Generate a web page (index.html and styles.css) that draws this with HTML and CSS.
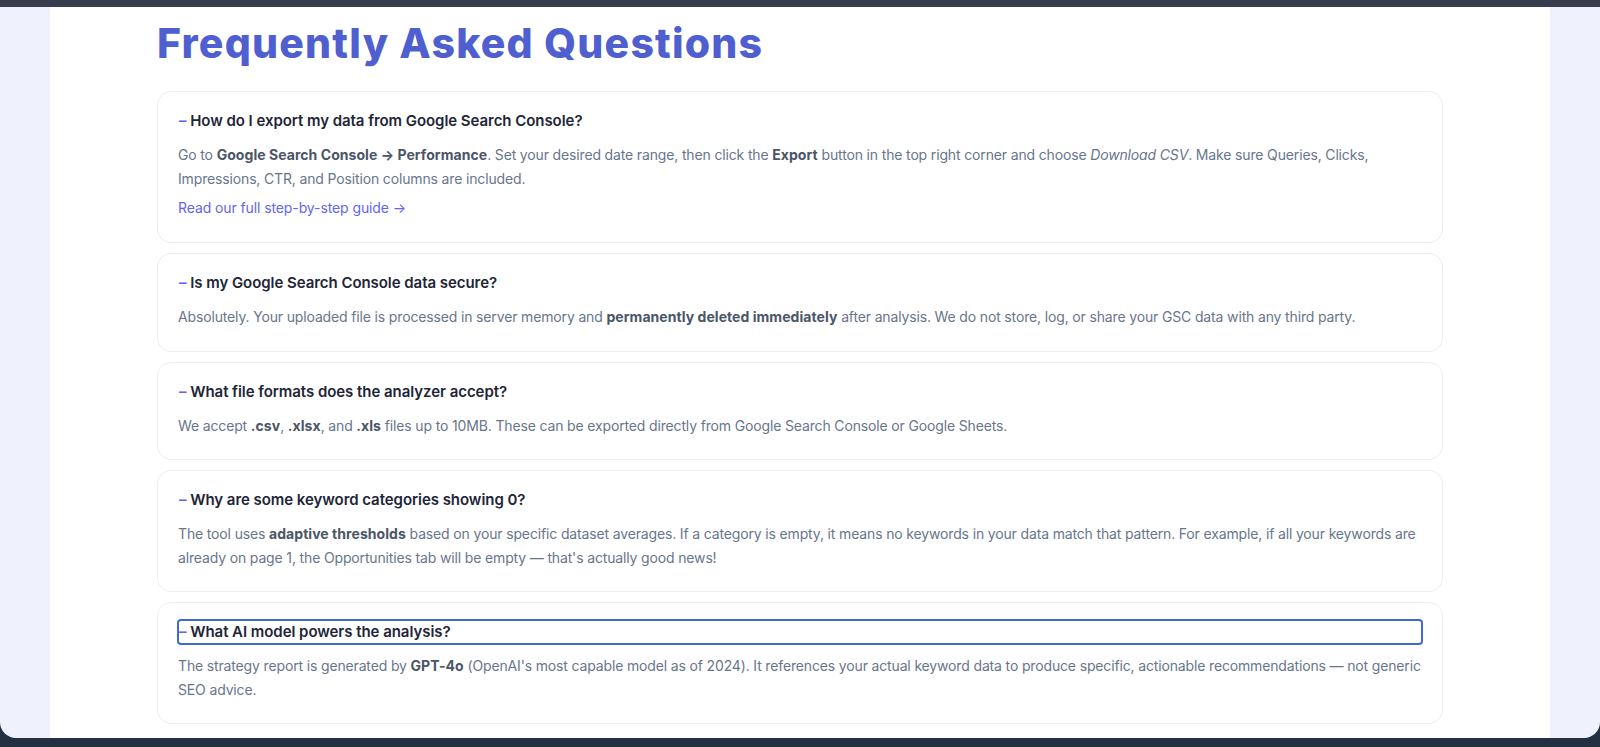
FILE: index.html
```html
<!DOCTYPE html>
<html lang="en">
<head>
<meta charset="utf-8">
<title>FAQ</title>
<link rel="stylesheet" href="styles.css">
</head>
<body>
<div class="window">
  <div class="page">
    <section class="faq">
      <h1 class="faq-title">Frequently Asked Questions</h1>
      <div class="faq-list">
        <details class="faq-item" open>
          <summary class="faq-q"><span class="dash">–</span> How do I export my data from Google Search Console?</summary>
          <p class="faq-a">Go to <strong>Google Search Console → Performance</strong>. Set your desired date range, then click the <strong>Export</strong> button in the top right corner and choose <em>Download CSV</em>. Make sure Queries, Clicks, Impressions, CTR, and Position columns are included.</p>
          <a class="faq-link" href="#">Read our full step-by-step guide →</a>
        </details>
        <details class="faq-item" open>
          <summary class="faq-q"><span class="dash">–</span> Is my Google Search Console data secure?</summary>
          <p class="faq-a">Absolutely. Your uploaded file is processed in server memory and <strong>permanently deleted immediately</strong> after analysis. We do not store, log, or share your GSC data with any third party.</p>
        </details>
        <details class="faq-item" open>
          <summary class="faq-q"><span class="dash">–</span> What file formats does the analyzer accept?</summary>
          <p class="faq-a">We accept <strong>.csv</strong>, <strong>.xlsx</strong>, and <strong>.xls</strong> files up to 10MB. These can be exported directly from Google Search Console or Google Sheets.</p>
        </details>
        <details class="faq-item" open>
          <summary class="faq-q"><span class="dash">–</span> Why are some keyword categories showing 0?</summary>
          <p class="faq-a">The tool uses <strong>adaptive thresholds</strong> based on your specific dataset averages. If a category is empty, it means no keywords in your data match that pattern. For example, if all your keywords are already on page 1, the Opportunities tab will be empty — that's actually good news!</p>
        </details>
        <details class="faq-item" open>
          <summary class="faq-q is-focused"><span class="dash">–</span> What AI model powers the analysis?</summary>
          <p class="faq-a">The strategy report is generated by <strong>GPT-4o</strong> (OpenAI's most capable model as of 2024). It references your actual keyword data to produce specific, actionable recommendations — not generic SEO advice.</p>
        </details>
      </div>
    </section>
  </div>
</div>
</body>
</html>
```
FILE: styles.css
```css
html, body {
  margin: 0;
  padding: 0;
  height: 100%;
}
body {
  background: linear-gradient(180deg, #383d4e 0, #383d4e 7px, #1c2632 7px, #223041 100%);
  font-family: Inter, "Noto Sans", "Liberation Sans", sans-serif;
  overflow: hidden;
}
.window {
  margin-top: 7px;
  height: 731px;
  background: #eff2fd;
  border-radius: 0 0 16px 16px;
  overflow: hidden;
  padding: 0 50px;
  box-sizing: border-box;
}
.page {
  background: #ffffff;
  height: 100%;
  padding-top: 12px;
  box-sizing: border-box;
}
.faq {
  width: 1286px;
  margin: 0 auto;
}
.faq-title {
  margin: 0 0 24px;
  font-size: 41px;
  line-height: 48px;
  font-weight: 800;
  color: #4f5fcf;
  letter-spacing: 1.2px;
}
.faq-list {
  display: flex;
  flex-direction: column;
  gap: 10px;
}
.faq-item {
  border: 1px solid #eceef3;
  border-radius: 14px;
  padding: 17px 20px 22px;
  background: #ffffff;
}
.faq-q {
  list-style: none;
  font-size: 15px;
  line-height: 24px;
  font-weight: 600;
  color: #1e2537;
  cursor: pointer;
  border-radius: 3px;
  letter-spacing: -0.05px;
}
.faq-q::-webkit-details-marker {
  display: none;
}
.faq-q.is-focused {
  outline: 2px solid #3d6bd6;
  outline-offset: -1px;
}
.dash {
  color: #6366f1;
  margin-left: 1px;
}
.faq-a {
  margin: 10px 0 0;
  font-size: 14px;
  line-height: 23.5px;
  color: #68768c;
  letter-spacing: -0.15px;
}
.faq-a strong {
  font-weight: 700;
  color: #4b5568;
  letter-spacing: 0.05px;
}
.faq-link {
  display: block;
  margin-top: 6px;
  font-size: 14px;
  line-height: 24px;
  color: #6366f1;
  text-decoration: none;
  letter-spacing: -0.1px;
}
```
